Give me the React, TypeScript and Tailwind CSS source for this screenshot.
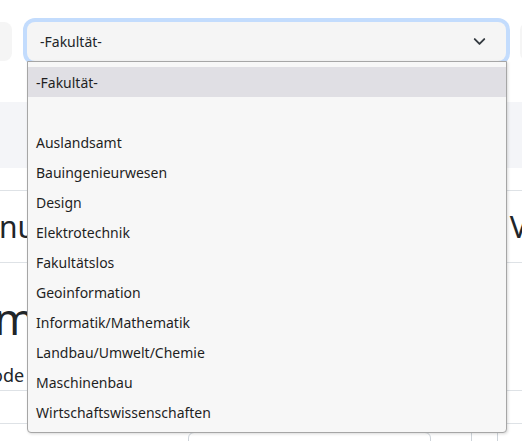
import { ChevronDown } from "lucide-react";

const faculties = [
  "-Fakultät-",
  "",
  "Auslandsamt",
  "Bauingenieurwesen",
  "Design",
  "Elektrotechnik",
  "Fakultätslos",
  "Geoinformation",
  "Informatik/Mathematik",
  "Landbau/Umwelt/Chemie",
  "Maschinenbau",
  "Wirtschaftswissenschaften",
];

export default function App() {
  return (
    <div
      className="relative w-full h-[441px] overflow-hidden bg-white text-[#212529]"
      style={{ fontFamily: '"Noto Sans", "Open Sans", sans-serif' }}
    >
      {/* header row with filter selects */}
      <div className="flex items-start pt-[22px]">
        <div className="w-[12px] h-[39px] shrink-0 rounded-r-lg bg-[#f5f5f5]" />
        <div className="ml-[15px] w-[479px] h-[39px] shrink-0 rounded-lg bg-[#f5f5f5] ring-4 ring-[#c3dcfd] flex items-center justify-between pl-[13px] pr-[17px] text-[14px]">
          <span>-Fakultät-</span>
          <ChevronDown size={19} strokeWidth={2.4} className="text-[#343a40]" />
        </div>
        <div className="ml-[14px] w-[10px] h-[39px] shrink-0 rounded-l-lg bg-[#f5f5f5]" />
      </div>

      <div className="mt-[41px] h-[66px] bg-[#f4f5f8]" />

      <div className="mt-[22px] border-t border-[#dee2e6] h-[72px] flex items-center justify-between">
        <span className="text-[30px] leading-none -ml-[1px]">nu</span>
        <span className="text-[30px] leading-none mr-[-22px]">Ve</span>
      </div>

      <div className="border-t border-[#dee2e6] h-[128px] flex flex-col justify-end pb-[6px]">
        <span className="text-[44px] leading-none -ml-[6px]">me</span>
        <span className="text-[18px] leading-none mt-[26px] -ml-[8px]">ode</span>
      </div>

      <div className="border-t border-[#dee2e6] h-[33px]" />
      <div className="border-t border-[#dee2e6] h-[17px] relative">
        <div className="absolute left-[188px] top-[8px] w-[243px] h-[20px] rounded-t-md border border-[#ced4da]" />
        <div className="absolute left-[471px] top-[8px] h-[20px] border-l border-[#ced4da]" />
        <div className="absolute left-[497px] top-[8px] h-[20px] border-l border-[#ced4da]" />
      </div>

      {/* open native-style options list */}
      <ul className="absolute left-[27px] top-[61px] w-[480px] h-[372px] bg-[#f7f7f7] border border-[#a6a6a6] rounded-b-[4px] shadow-[1px_1px_3px_rgba(0,0,0,0.15)] pt-[5px] text-[14px] text-[#1f1f1f]">
        {faculties.map((f, i) => (
          <li
            key={i}
            className={`h-[30px] flex items-center pl-[8px] ${i === 0 ? "bg-[#e0dfe4]" : ""}`}
          >
            {f}
          </li>
        ))}
      </ul>
    </div>
  );
}
